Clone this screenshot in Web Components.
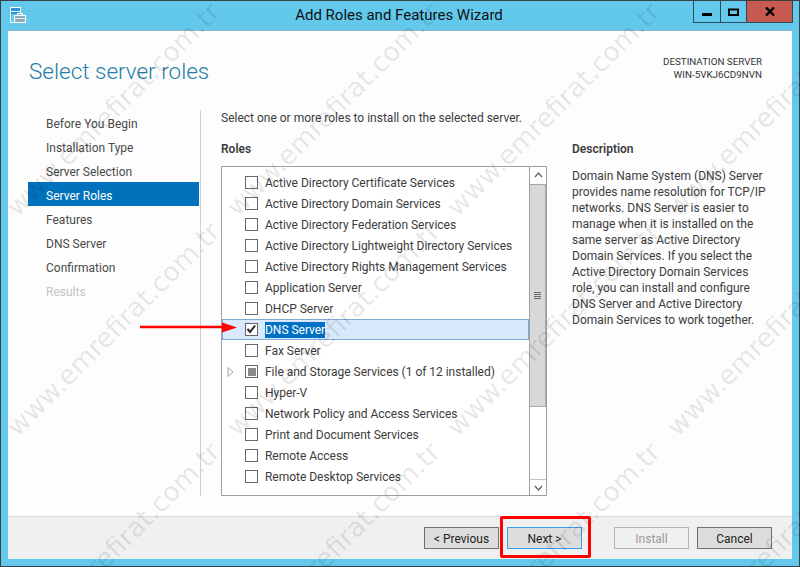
<!DOCTYPE html>
<html lang="en">
<head>
<meta charset="utf-8">
<title>Add Roles and Features Wizard</title>
<style>
    html, body { margin: 0; height: 100%; overflow: hidden; background: #62c9ec; }
    body { font-family: "Roboto", "Liberation Sans", sans-serif; font-size: 12px; color: #3c3c3c; }
</style>
</head>
<body>
<wizard-window>
    <wizard-titlebar slot="titlebar">Add Roles and Features Wizard</wizard-titlebar>
    <wizard-header slot="header"></wizard-header>
    <wizard-nav slot="nav"></wizard-nav>
    <div slot="main">Select one or more roles to install on the selected server.</div>
    <role-list slot="roles"></role-list>
    <role-description slot="description"></role-description>
    <wizard-footer slot="footer"></wizard-footer>
</wizard-window>
<water-mark></water-mark>
<call-outs></call-outs>

<script>
class WizardWindow extends HTMLElement {
    constructor() {
        super();
        this.attachShadow({ mode: 'open' }).innerHTML = /*html*/`
            <style>
                * { box-sizing: border-box; }
                :host {
                    display: flex;
                    flex-direction: column;
                    box-sizing: border-box;
                    width: 800px;
                    height: 567px;
                    background: #62c9ec;
                    border: 1px solid #3b3f42;
                }
                .client {
                    display: flex;
                    flex-direction: column;
                    flex: 1;
                    margin: 0 7px 7px 7px;
                    background: #fdfdfd;
                    border-top: 1px solid #8fb4c6;
                    min-height: 0;
                }
                .columns {
                    display: grid;
                    grid-template-columns: 172px 1fr;
                    margin-left: 20px;
                    height: 386px;
                }
                .content {
                    border-left: 1px solid #cfcfcf;
                    height: 386px;
                    padding-left: 20px;
                    display: grid;
                    grid-template-columns: 326px 1fr;
                    grid-template-rows: 56px 1fr;
                }
                .intro { grid-column: 1 / 3; line-height: 16px; }
                .roles-col { display: flex; flex-direction: column; margin-top: -25px; }
                h3 {
                    margin: 0 0 9px;
                    font-size: 12px;
                    line-height: 16px;
                    font-weight: 600;
                }
            </style>
            <slot name="titlebar"></slot>
            <div class="client">
                <slot name="header"></slot>
                <div class="columns">
                    <slot name="nav"></slot>
                    <div class="content">
                        <div class="intro"><slot name="main"></slot></div>
                        <div class="roles-col">
                            <h3>Roles</h3>
                            <slot name="roles"></slot>
                        </div>
                        <slot name="description"></slot>
                    </div>
                </div>
                <slot name="footer"></slot>
            </div>
        `;
    }
}

class WizardTitlebar extends HTMLElement {
    constructor() {
        super();
        this.attachShadow({ mode: 'open' }).innerHTML = /*html*/`
            <style>
                :host {
                    display: flex;
                    height: 29px;
                    align-items: flex-start;
                    color: #111;
                }
                .icon { width: 16px; height: 16px; margin: 6px 0 0 9px; flex: none; }
                .title {
                    flex: 1;
                    text-align: center;
                    font-size: 15px;
                    line-height: 29px;
                    padding-left: 79px;
                }
                .controls { display: flex; height: 21px; margin-right: 6px; border: 1px solid #2e4a5a; border-top: 0; }
                .controls div { display: flex; align-items: center; justify-content: center; }
                .min { width: 27px; border-right: 1px solid #2e4a5a; box-sizing: border-box; }
                .max { width: 26px; border-right: 1px solid #2e4a5a; box-sizing: border-box; }
                .close { width: 45px; background: #c75a50; }
            </style>
            <svg class="icon" viewBox="0 0 16 16" fill="none" stroke="#fff" stroke-width="1">
                <path d="M.5 .5h10v6M.5 .5v15h3" />
                <rect x="1" y="1" width="9" height="3.5" fill="#2a93dc" stroke="none"/>
                <path d="M1 4.5h9"/>
                <rect x="1" y="5" width="9" height="2" fill="#2a93dc" stroke="none"/>
                <rect x="4.5" y="8.5" width="11" height="7" fill="#8faab8"/>
                <path d="M7.5 8.5v-2h5v2"/>
                <path d="M5 11.5h10" stroke="#dfe9ee"/>
            </svg>
            <div class="title"><slot></slot></div>
            <div class="controls">
                <div class="min"><svg width="10" height="10"><rect y="6" width="10" height="3" fill="#000"/></svg></div>
                <div class="max"><svg width="11" height="9"><path d="M1 2.5h9V8H1z" fill="none" stroke="#000" stroke-width="2"/></svg></div>
                <div class="close"><svg width="10" height="9"><path d="M1 0.5l8 8M9 0.5l-8 8" stroke="#000" stroke-width="2.4"/></svg></div>
            </div>
        `;
    }
}

class WizardHeader extends HTMLElement {
    constructor() {
        super();
        this.attachShadow({ mode: 'open' }).innerHTML = /*html*/`
            <style>
                :host {
                    display: flex;
                    justify-content: space-between;
                    height: 79px;
                    padding: 0 30px 0 21px;
                    box-sizing: border-box;
                    flex: none;
                }
                h1 {
                    margin: 24px 0 0;
                    font-size: 22.5px;
                    line-height: 32px;
                    font-weight: 300;
                    color: #2380a8;
                }
                .dest {
                    margin-top: 24px;
                    text-align: right;
                    font-size: 9.8px;
                    line-height: 13px;
                    color: #333;
                }
            </style>
            <h1>Select server roles</h1>
            <div class="dest">DESTINATION SERVER<br>WIN-5VKJ6CD9NVN</div>
        `;
    }
}

class WizardNav extends HTMLElement {
    constructor() {
        super();
        const steps = ['Before You Begin', 'Installation Type', 'Server Selection', 'Server Roles', 'Features', 'DNS Server', 'Confirmation', 'Results'];
        this.attachShadow({ mode: 'open' }).innerHTML = /*html*/`
            <style>
                :host { display: block; }
                div { height: 24px; line-height: 28px; padding-left: 18px; color: #4a4a4a; }
                .active { background: #0072bc; color: #fff; margin-right: 1px; }
                .off { color: #c4c4c4; }
            </style>
            ${steps.map(s => `<div class="${s === 'Server Roles' ? 'active' : s === 'Results' ? 'off' : ''}">${s}</div>`).join('')}
        `;
    }
}

class RoleList extends HTMLElement {
    constructor() {
        super();
        const roles = [
            ['Active Directory Certificate Services'],
            ['Active Directory Domain Services'],
            ['Active Directory Federation Services'],
            ['Active Directory Lightweight Directory Services'],
            ['Active Directory Rights Management Services'],
            ['Application Server'],
            ['DHCP Server'],
            ['DNS Server', 'checked'],
            ['Fax Server'],
            ['File and Storage Services (1 of 12 installed)', 'partial'],
            ['Hyper-V'],
            ['Network Policy and Access Services'],
            ['Print and Document Services'],
            ['Remote Access'],
            ['Remote Desktop Services']
        ];
        this.attachShadow({ mode: 'open' }).innerHTML = /*html*/`
            <style>
                * { box-sizing: border-box; }
                :host {
                    display: flex;
                    box-sizing: border-box;
                    width: 326px;
                    height: 330px;
                    border: 1px solid #a0a0a0;
                    background: #fff;
                }
                .items { flex: 1; padding-top: 5px; }
                .row {
                    display: flex;
                    align-items: center;
                    height: 21px;
                    padding-left: 23px;
                    position: relative;
                    letter-spacing: -.02px;
                }
                .row.checked { background: #d9e9fb; box-shadow: inset 0 0 0 1px #80a8d4; }
                .box {
                    width: 13px;
                    height: 13px;
                    border: 1px solid #666;
                    background: #fff;
                    margin-right: 7px;
                    flex: none;
                    display: flex;
                    align-items: center;
                    justify-content: center;
                }
                .partial .box::after { content: ""; width: 8px; height: 8px; background: #8a8a8a; flex: none; }
                .label { line-height: 16px; }
                .checked .label { background: #0072c6; color: #fff; }
                .expander { position: absolute; left: 5px; top: 6px; }
                .bar { width: 17px; border-left: 1px solid #a0a0a0; display: flex; flex-direction: column; }
                .btn { height: 16px; flex: none; display: flex; align-items: center; justify-content: center; }
                .btn.down { border-top: 1px solid #c4c4c4; }
                .thumb {
                    height: 223px;
                    margin-top: 1px;
                    background: #d8d8d8;
                    border: 1px solid #a8a8a8;
                    border-left: 0;
                    display: flex;
                    align-items: center;
                    justify-content: center;
                    flex: none;
                }
                .track { flex: 1; }
            </style>
            <div class="items">
                ${roles.map(([name, state]) => `
                    <div class="row ${state || ''}">
                        ${state === 'partial' ? '<svg class="expander" width="7" height="10"><path d="M1 .5l5 4.5-5 4.5z" fill="#fff" stroke="#a6a6a6"/></svg>' : ''}
                        <span class="box">${state === 'checked' ? '<svg width="11" height="11"><path d="M1.5 5l2.6 3 5-6.5" fill="none" stroke="#222" stroke-width="2"/></svg>' : ''}</span>
                        <span class="label">${name}</span>
                    </div>`).join('')}
            </div>
            <div class="bar">
                <div class="btn"><svg width="9" height="6"><path d="M1 5l3.5-4L8 5" fill="none" stroke="#606060" stroke-width="1.2"/></svg></div>
                <div class="thumb"><svg width="7" height="8" shape-rendering="crispEdges"><path d="M0 .5h7M0 2.5h7M0 4.5h7M0 6.5h7" stroke="#666"/></svg></div>
                <div class="track"></div>
                <div class="btn down"><svg width="9" height="6"><path d="M1 1l3.5 4L8 1" fill="none" stroke="#606060" stroke-width="1.2"/></svg></div>
            </div>
        `;
    }
}

class RoleDescription extends HTMLElement {
    constructor() {
        super();
        this.attachShadow({ mode: 'open' }).innerHTML = /*html*/`
            <style>
                :host { display: block; margin-left: 25px; margin-top: -25px; width: 205px; }
                h3 { margin: 0 0 11px; font-size: 12px; line-height: 16px; font-weight: 600; }
                p { margin: 0; line-height: 16px; white-space: nowrap; }
            </style>
            <h3>Description</h3>
            <p>Domain Name System (DNS) Server<br>
            provides name resolution for TCP/IP<br>
            networks. DNS Server is easier to<br>
            manage when it is installed on the<br>
            same server as Active Directory<br>
            Domain Services. If you select the<br>
            Active Directory Domain Services<br>
            role, you can install and configure<br>
            DNS Server and Active Directory<br>
            Domain Services to work together.</p>
        `;
    }
}

class WizardFooter extends HTMLElement {
    constructor() {
        super();
        this.attachShadow({ mode: 'open' }).innerHTML = /*html*/`
            <style>
                * { box-sizing: border-box; }
                :host {
                    display: flex;
                    flex: 1;
                    align-items: flex-start;
                    background: #f0f0f0;
                    border-top: 1px solid #dcdcdc;
                    padding: 10px 0 0 416px;
                    margin-top: 20px;
                }
                button {
                    width: 75px;
                    height: 22px;
                    padding: 2px 0 0;
                    font: inherit;
                    color: #222;
                    background: #dddddd;
                    border: 1px solid #707070;
                    margin-right: 8px;
                }
                .next { border-color: #3c9bea; }
                .install { margin-left: 24px; background: #f0f0f0; border-color: #b4b4b4; color: #9a9a9a; }
            </style>
            <button>&lt; Previous</button>
            <button class="next">Next &gt;</button>
            <button class="install" disabled>Install</button>
            <button>Cancel</button>
        `;
    }
}

class WaterMark extends HTMLElement {
    constructor() {
        super();
        const cells = [];
        for (let j = 0; j < 3; j++) {
            for (let i = 0; i < 4; i++) cells.push(`<span style="left:${113 + 220 * i}px;top:${109 + 220 * j}px">www.emrefirat.com.tr</span>`);
        }
        this.attachShadow({ mode: 'open' }).innerHTML = /*html*/`
            <style>
                :host { position: absolute; inset: 0; overflow: hidden; pointer-events: none; }
                span {
                    position: absolute;
                    transform: translate(-50%, -50%) rotate(-45deg);
                    font: 26.5px "DejaVu Sans", sans-serif;
                    color: rgba(0, 0, 0, .1);
                    white-space: nowrap;
                }
            </style>
            ${cells.join('')}
        `;
    }
}

class CallOuts extends HTMLElement {
    constructor() {
        super();
        this.attachShadow({ mode: 'open' }).innerHTML = /*html*/`
            <style>
                :host { position: absolute; inset: 0; pointer-events: none; }
                svg { position: absolute; left: 140px; top: 320px; }
                .box {
                    position: absolute;
                    left: 500px;
                    top: 516px;
                    width: 91px;
                    height: 42px;
                    box-sizing: border-box;
                    border: 3px solid #f00;
                    border-radius: 2px;
                }
            </style>
            <svg width="98" height="14"><path d="M0 7h82" stroke="#f00" stroke-width="2.5"/><path d="M82 2.5L97 7.5 82 12.5z" fill="#f00"/></svg>
            <div class="box"></div>
        `;
    }
}

customElements.define('wizard-window', WizardWindow);
customElements.define('wizard-titlebar', WizardTitlebar);
customElements.define('wizard-header', WizardHeader);
customElements.define('wizard-nav', WizardNav);
customElements.define('role-list', RoleList);
customElements.define('role-description', RoleDescription);
customElements.define('wizard-footer', WizardFooter);
customElements.define('water-mark', WaterMark);
customElements.define('call-outs', CallOuts);
</script>
</body>
</html>
